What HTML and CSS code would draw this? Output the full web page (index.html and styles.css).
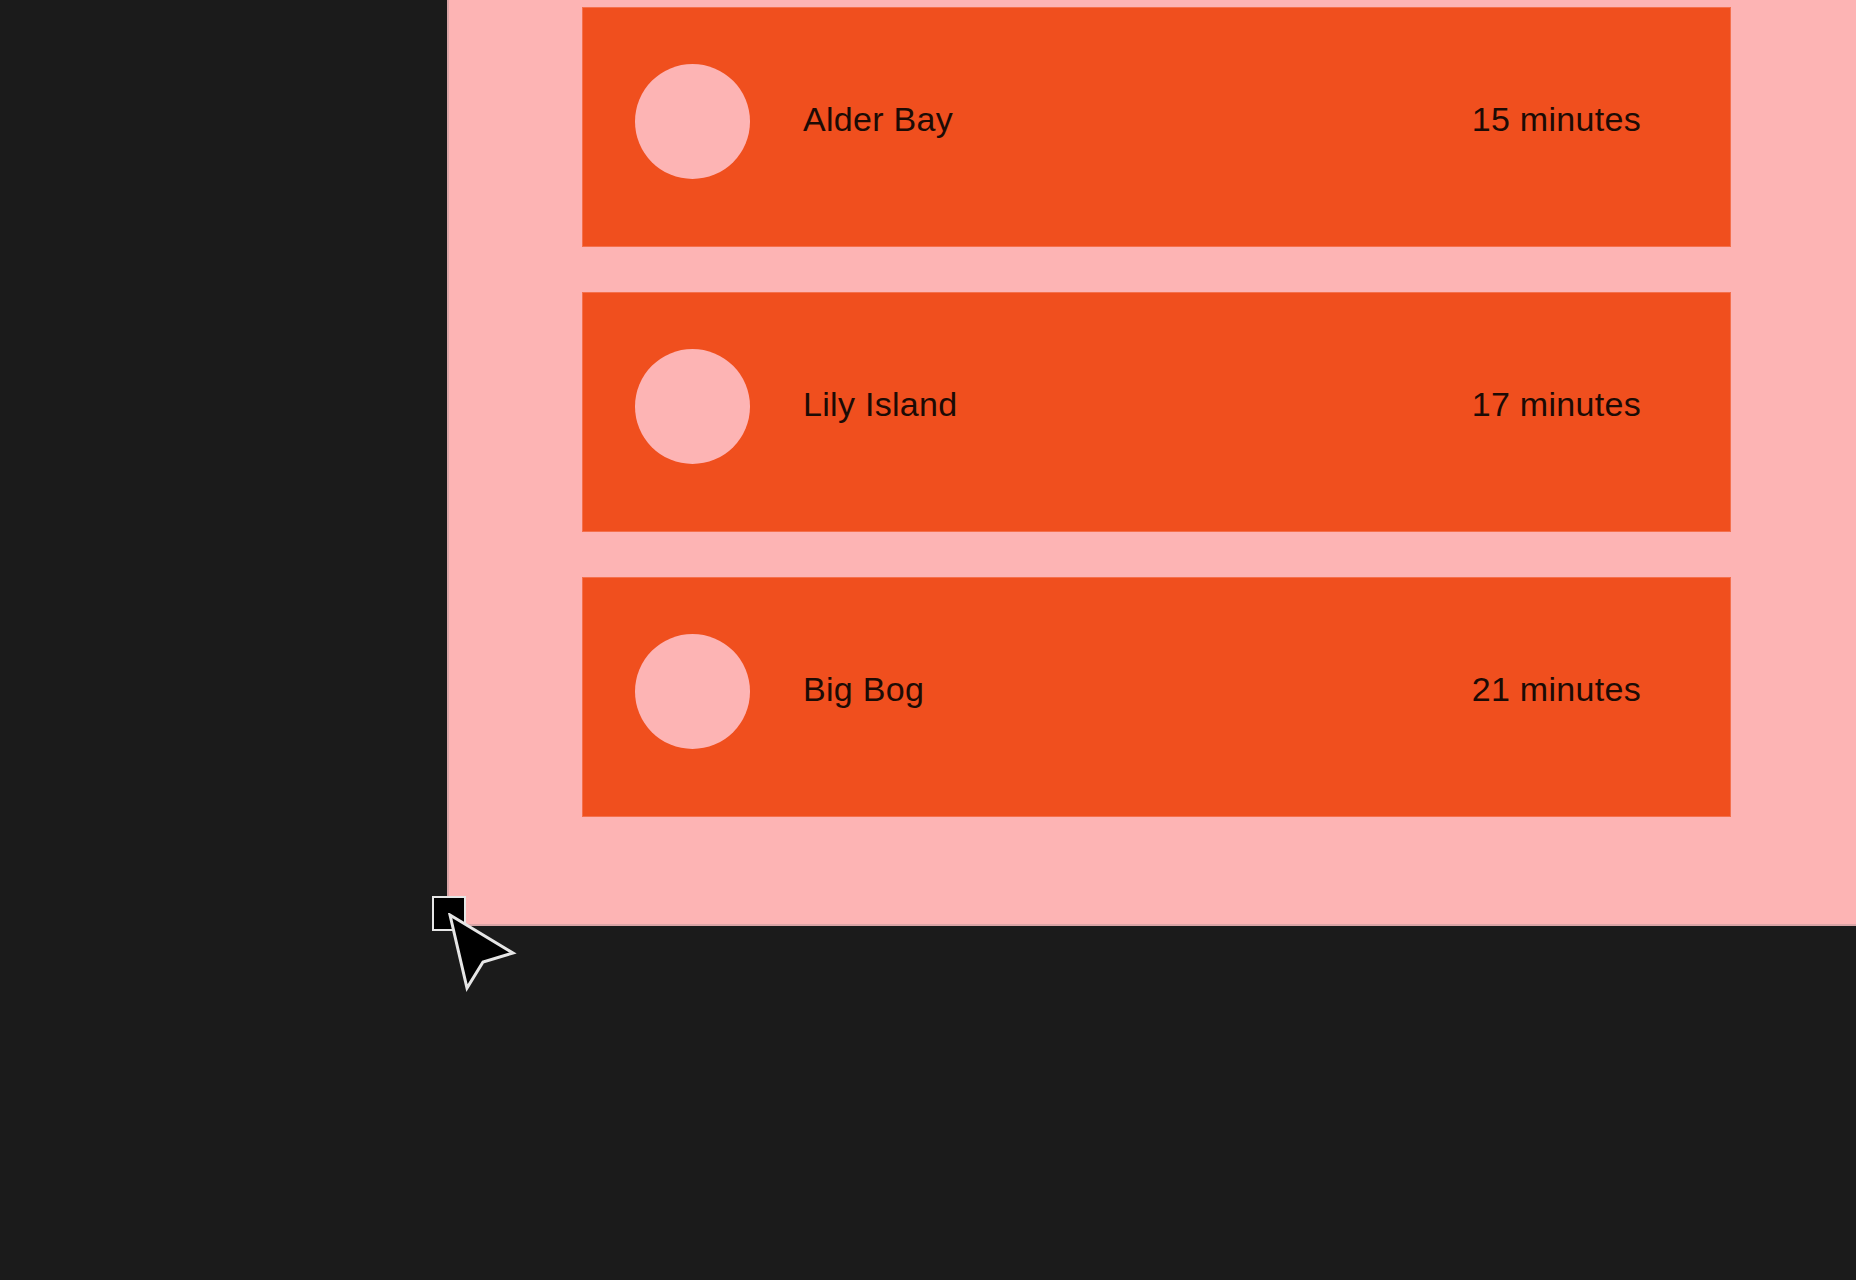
FILE: index.html
```html
<!DOCTYPE html>
<html lang="en">
  <head>
    <meta charset="UTF-8" />
    <meta name="viewport" content="width=device-width, initial-scale=1.0" />
    <title>Ferry Times</title>
    <link rel="stylesheet" href="styles.css">
  </head>
  <body>
    <main class="panel">
      <ul class="stops">
        <li class="stop">
          <span class="stop-dot"></span>
          <span class="stop-name">Alder Bay</span>
          <span class="stop-time">15 minutes</span>
        </li>
        <li class="stop">
          <span class="stop-dot"></span>
          <span class="stop-name">Lily Island</span>
          <span class="stop-time">17 minutes</span>
        </li>
        <li class="stop">
          <span class="stop-dot"></span>
          <span class="stop-name">Big Bog</span>
          <span class="stop-time">21 minutes</span>
        </li>
      </ul>
    </main>

    <!-- resize handle with pointer on the panel corner -->
    <div class="handle">
      <span class="handle-box"></span>
      <svg class="pointer" width="70" height="80" viewBox="0 0 70 80">
        <path d="M2 2 L65 40 L35 49 L19 75 Z" fill="#000" stroke="#e6e6e6" stroke-width="3" stroke-linejoin="miter" />
      </svg>
    </div>
  </body>
</html>
```

FILE: styles.css
```css
body {
  margin: 0;
  background: #1b1b1b;
  font-family: 'Liberation Sans', Arial, sans-serif;
  min-height: 1280px;
  position: relative;
}

.panel {
  margin-left: 447px;
  padding: 7px 125px 107px 133px;
  background: #fdb4b4;
  border-left: 2px solid #d9a4a6;
  border-bottom: 2px solid #d9a4a6;
  box-sizing: border-box;
}

.stops {
  list-style: none;
  margin: 0;
  padding: 0;
  display: flex;
  flex-direction: column;
  gap: 45px;
}

.stop {
  height: 240px;
  box-sizing: border-box;
  display: flex;
  align-items: center;
  padding: 0 89px 12px 52px;
  background: #f04f1e;
  border: 1px solid #f4704c;
  color: #1c0b05;
  font-size: 34px;
  letter-spacing: 0.3px;
}

.stop-dot {
  width: 115px;
  height: 115px;
  border-radius: 50%;
  background: #fdb4b4;
  flex: none;
}

.stop-name,
.stop-time {
  position: relative;
  top: -2px;
}

.stop-name {
  margin-left: 53px;
  flex: 1;
}

.handle {
  position: absolute;
  left: 432px;
  top: 896px;
}

.handle-box {
  display: block;
  width: 30px;
  height: 31px;
  background: #000;
  border: 2px solid #e6e6e6;
}

.pointer {
  position: absolute;
  left: 16px;
  top: 17px;
}
```
